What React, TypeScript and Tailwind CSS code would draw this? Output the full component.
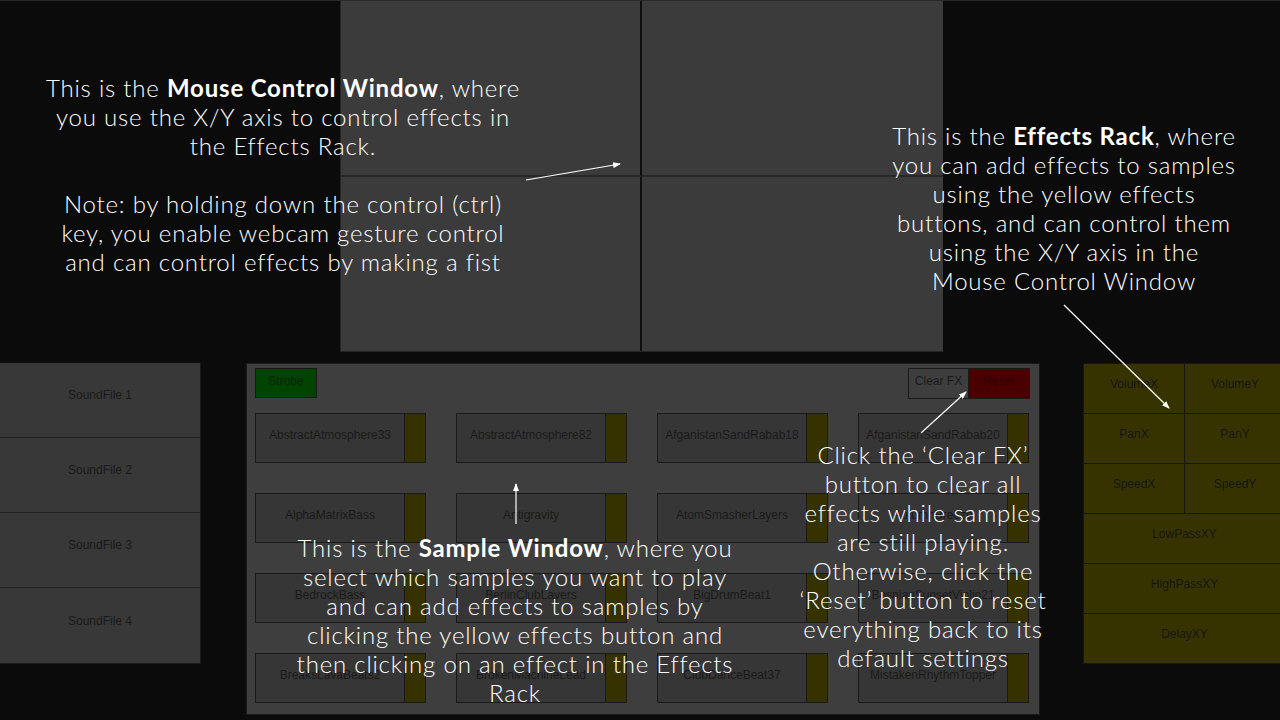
import React from "react";

const samples = [
  "AbstractAtmosphere33",
  "AbstractAtmosphere82",
  "AfganistanSandRabab18",
  "AfganistanSandRabab20",
  "AlphaMatrixBass",
  "Antigravity",
  "AtomSmasherLayers",
  "AutumnBreeze",
  "BedrockBass",
  "BerlinClubLayers",
  "BigDrumBeat1",
  "BosnianSunsetViolin21",
  "BreaksLavaBeats2",
  "BrokenMachineLead",
  "ClubDanceBeat37",
  "MistakenRhythmTopper",
];

function Tile({ name }: { name: string }) {
  return (
    <div className="flex h-[50px] w-[171px]">
      <div className="flex-1 bg-[#363636] border border-[#1a1a1a] flex justify-center pt-[12px] text-[12px] text-[#1a1a1a] whitespace-nowrap overflow-hidden">
        {name}
      </div>
      <div className="w-[21px] bg-[#353200] border border-l-0 border-[#1a1a1a]" />
    </div>
  );
}

function RackCell({ label }: { label: string }) {
  return (
    <div className="flex-1 h-[50px] flex items-center justify-center pb-[10px] border-r border-b border-[#161616] text-[12px] text-[#161616]">
      {label}
    </div>
  );
}

const anno = 'Lato, "Open Sans", sans-serif';

export default function App() {
  const sans = { fontFamily: '"Liberation Sans", Arial, sans-serif' };
  return (
    <div
      className="relative w-[1280px] h-[720px] overflow-hidden bg-[#0b0b0b] border-t border-[#2a2a2a]"
      style={sans}
    >
      {/* Top: Mouse control window */}
      <div className="flex h-[351px]">
        <div className="ml-[340px] w-[603px] h-full shrink-0 bg-[#3b3b3b] border-l border-b border-[#262626] grid grid-cols-[301px_1fr] grid-rows-[176px_1fr]">
          <div className="border-r-2 border-b-2 border-r-[#0f0f0f] border-b-[#282828]" />
          <div className="border-b-2 border-[#282828]" />
          <div className="border-r-2 border-[#0f0f0f]" />
          <div />
        </div>
      </div>

      {/* Bottom row */}
      <div className="flex items-start mt-[11px]">
        {/* Sound files */}
        <div className="w-[201px] shrink-0 flex flex-col border-r border-b border-[#1a1a1a] bg-[#383838]">
          {["SoundFile 1", "SoundFile 2", "SoundFile 3", "SoundFile 4"].map((s, i) => (
            <div
              key={s}
              className={`h-[75px] flex items-center justify-center pb-[10px] text-[12px] text-[#1a1a1a] ${i < 3 ? "border-b border-[#202020]" : ""}`}
            >
              {s}
            </div>
          ))}
        </div>

        {/* Sample window */}
        <div className="ml-[45px] w-[794px] h-[352px] shrink-0 bg-[#3e3e3e] border border-[#1a1a1a] pl-[8px] pr-[9px] pt-[4px] flex flex-col">
          <div className="flex justify-between h-[31px]">
            <div className="w-[62px] h-[30px] bg-[#004400] border border-[#181818] flex justify-center pt-[3px] text-[12px] text-[#0c220c]">
              Strobe
            </div>
            <div className="flex">
              <div className="w-[61px] h-[31px] bg-[#3e3e3e] border border-[#1a1a1a] flex justify-center pt-[3px] text-[12px] text-[#1a1a1a]">
                Clear FX
              </div>
              <div className="w-[61px] h-[31px] bg-[#4a0000] border border-l-0 border-[#1a1a1a] flex justify-center pt-[3px] text-[12px] text-[#300000]">
                Reset
              </div>
            </div>
          </div>
          <div className="mt-[14px] grid grid-cols-[171px_171px_171px_171px] gap-x-[30px] gap-y-[30px]">
            {samples.map((s) => (
              <Tile key={s} name={s} />
            ))}
          </div>
        </div>

        {/* Effects rack */}
        <div className="ml-[43px] w-[203px] shrink-0 bg-[#363300] border-l border-t border-[#161616] flex flex-col">
          <div className="flex">
            <RackCell label="VolumeX" />
            <RackCell label="VolumeY" />
          </div>
          <div className="flex">
            <RackCell label="PanX" />
            <RackCell label="PanY" />
          </div>
          <div className="flex">
            <RackCell label="SpeedX" />
            <RackCell label="SpeedY" />
          </div>
          <div className="flex">
            <RackCell label="LowPassXY" />
          </div>
          <div className="flex">
            <RackCell label="HighPassXY" />
          </div>
          <div className="flex">
            <RackCell label="DelayXY" />
          </div>
        </div>
      </div>

      {/* Annotations */}
      <div
        className="absolute left-[-17px] top-[72px] w-[600px] text-center text-white text-[24px] leading-[29px] tracking-[0.8px] font-light whitespace-nowrap"
        style={{ fontFamily: anno }}
      >
        This is the <b className="font-bold">Mouse Control Window</b>, where
        <br />
        you use the X/Y axis to control effects in
        <br />
        the Effects Rack.
        <br />
        <br />
        Note: by holding down the control (ctrl)
        <br />
        key, you enable webcam gesture control
        <br />
        and can control effects by making a fist
      </div>

      <div
        className="absolute left-[889px] top-[120px] w-[350px] text-center text-white text-[24px] leading-[29px] tracking-[0.8px] font-light whitespace-nowrap"
        style={{ fontFamily: anno }}
      >
        This is the <b className="font-bold">Effects Rack</b>, where
        <br />
        you can add effects to samples
        <br />
        using the yellow effects
        <br />
        buttons, and can control them
        <br />
        using the X/Y axis in the
        <br />
        Mouse Control Window
      </div>

      <div
        className="absolute left-[235px] top-[532px] w-[560px] text-center text-white text-[24px] leading-[29px] tracking-[0.8px] font-light whitespace-nowrap"
        style={{ fontFamily: anno }}
      >
        This is the <b className="font-bold">Sample Window</b>, where you
        <br />
        select which samples you want to play
        <br />
        and can add effects to samples by
        <br />
        clicking the yellow effects button and
        <br />
        then clicking on an effect in the Effects
        <br />
        Rack
      </div>

      <div
        className="absolute left-[773px] top-[439px] w-[300px] text-center text-white text-[24px] leading-[29px] tracking-[0.8px] font-light whitespace-nowrap"
        style={{ fontFamily: anno }}
      >
        Click the ‘Clear FX’
        <br />
        button to clear all
        <br />
        effects while samples
        <br />
        are still playing.
        <br />
        Otherwise, click the
        <br />
        ‘Reset’ button to reset
        <br />
        everything back to its
        <br />
        default settings
      </div>

      {/* Arrows */}
      <svg className="absolute inset-0 pointer-events-none" width="1280" height="720" viewBox="0 0 1280 720">
        <defs>
          <marker id="ah" markerWidth="8" markerHeight="6" refX="7" refY="3" orient="auto" markerUnits="userSpaceOnUse">
            <path d="M0,0 L8,3 L0,6 Z" fill="#fff" />
          </marker>
        </defs>
        <g stroke="#fff" strokeWidth="1.2" fill="none">
          <line x1="526" y1="179" x2="620" y2="163" markerEnd="url(#ah)" />
          <line x1="516" y1="523" x2="516" y2="483" markerEnd="url(#ah)" />
          <line x1="921" y1="432" x2="966" y2="391" markerEnd="url(#ah)" />
          <line x1="1064" y1="304" x2="1169" y2="407" markerEnd="url(#ah)" />
        </g>
      </svg>
    </div>
  );
}
